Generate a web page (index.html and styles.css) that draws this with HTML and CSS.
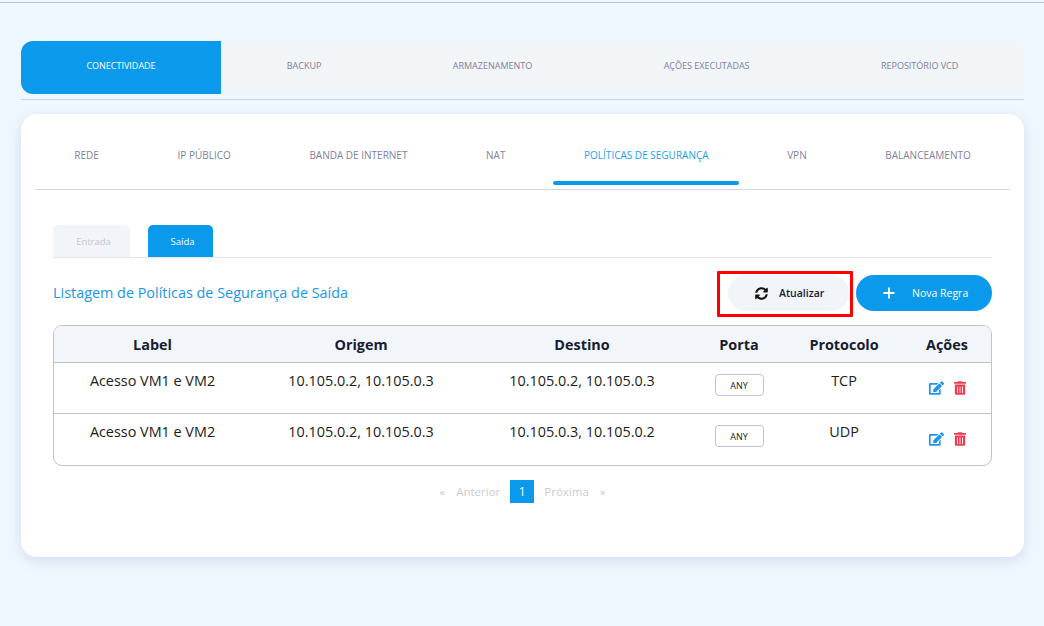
FILE: index.html
```html
<!DOCTYPE html>
<html>
<head>
  <title>Políticas de Segurança</title>
  <meta charset="utf-8">
  <link rel="stylesheet" href="styles.css">
</head>
<body>
  <div class="page">
    <nav class="main-tabs">
      <a class="main-tab active">CONECTIVIDADE</a>
      <a class="main-tab">BACKUP</a>
      <a class="main-tab">ARMAZENAMENTO</a>
      <a class="main-tab">AÇÕES EXECUTADAS</a>
      <a class="main-tab">REPOSITÓRIO VCD</a>
    </nav>

    <section class="card">
      <nav class="sub-tabs">
        <a class="sub-tab">REDE</a>
        <a class="sub-tab">IP PÚBLICO</a>
        <a class="sub-tab">BANDA DE INTERNET</a>
        <a class="sub-tab">NAT</a>
        <a class="sub-tab active">POLÍTICAS DE SEGURANÇA</a>
        <a class="sub-tab">VPN</a>
        <a class="sub-tab">BALANCEAMENTO</a>
      </nav>

      <div class="content">
        <div class="pill-tabs">
          <a class="pill-tab entrada">Entrada</a>
          <a class="pill-tab saida active">Saída</a>
        </div>

        <div class="list-header">
          <h2 class="list-title">Listagem de Políticas de Segurança de Saída</h2>
          <div class="actions">
            <button class="btn btn-light">
              <svg class="icon-sync" viewBox="0 0 512 512"><path d="M370.72 133.28C339.458 104.008 298.888 87.962 255.848 88c-77.458.068-144.328 53.178-162.791 126.85-1.344 5.363-6.122 9.15-11.651 9.15H24.103c-7.498 0-13.194-6.807-11.807-14.176C33.933 94.924 134.813 8 256 8c66.448 0 126.791 26.136 171.315 68.685L463.03 40.97C478.149 25.851 504 36.559 504 57.941V192c0 13.255-10.745 24-24 24H345.941c-21.382 0-32.09-25.851-16.971-40.971l41.75-41.749zM32 296h134.059c21.382 0 32.09 25.851 16.971 40.971l-41.75 41.75c31.262 29.273 71.835 45.319 114.876 45.28 77.418-.07 144.315-53.144 162.787-126.849 1.344-5.363 6.122-9.15 11.651-9.15h57.304c7.498 0 13.194 6.807 11.807 14.176C478.067 417.076 377.187 504 256 504c-66.448 0-126.791-26.136-171.315-68.685L48.97 471.03C33.851 486.149 8 475.441 8 454.059V320c0-13.255 10.745-24 24-24z"/></svg>
              <span>Atualizar</span>
              <span class="highlight"></span>
            </button>
            <button class="btn btn-primary">
              <svg class="icon-plus" viewBox="0 0 12 12"><path d="M6 0.5v11M0.5 6h11"/></svg>
              <span>Nova Regra</span>
            </button>
          </div>
        </div>

        <div class="table-wrap">
          <table class="rules">
            <thead>
              <tr>
                <th class="col-label">Label</th>
                <th class="col-origem">Origem</th>
                <th class="col-destino">Destino</th>
                <th class="col-porta">Porta</th>
                <th class="col-protocolo">Protocolo</th>
                <th>Ações</th>
              </tr>
            </thead>
            <tbody>
              <tr>
                <td>Acesso VM1 e VM2</td>
                <td>10.105.0.2, 10.105.0.3</td>
                <td>10.105.0.2, 10.105.0.3</td>
                <td><span class="badge">ANY</span></td>
                <td>TCP</td>
                <td>
                  <div class="row-actions">
                    <svg class="icon-edit" viewBox="0 0 576 512"><path d="M402.6 83.2l90.2 90.2c3.8 3.8 3.8 10 0 13.8L274.4 405.6l-92.8 10.3c-12.4 1.4-22.9-9.1-21.5-21.5l10.3-92.8L388.8 83.2c3.8-3.8 10-3.8 13.8 0zm162-22.9l-48.8-48.8c-15.2-15.2-39.9-15.2-55.2 0l-35.4 35.4c-3.8 3.8-3.8 10 0 13.8l90.2 90.2c3.8 3.8 10 3.8 13.8 0l35.4-35.4c15.2-15.3 15.2-40 0-55.2zM384 346.2V448H64V128h229.8c3.2 0 6.2-1.3 8.5-3.5l40-40c7.6-7.6 2.2-20.5-8.5-20.5H48C21.5 64 0 85.5 0 112v352c0 26.5 21.5 48 48 48h352c26.5 0 48-21.5 48-48V306.2c0-10.7-12.9-16-20.5-8.5l-40 40c-2.2 2.3-3.5 5.3-3.5 8.5z"/></svg>
                    <svg class="icon-trash" viewBox="0 0 448 512"><path d="M32 464a48 48 0 0 0 48 48h288a48 48 0 0 0 48-48V128H32zm272-256a16 16 0 0 1 32 0v224a16 16 0 0 1-32 0zm-96 0a16 16 0 0 1 32 0v224a16 16 0 0 1-32 0zm-96 0a16 16 0 0 1 32 0v224a16 16 0 0 1-32 0zM432 32H312l-9.4-18.7A24 24 0 0 0 281.1 0H166.8a23.72 23.72 0 0 0-21.4 13.3L136 32H16A16 16 0 0 0 0 48v32a16 16 0 0 0 16 16h416a16 16 0 0 0 16-16V48a16 16 0 0 0-16-16z"/></svg>
                  </div>
                </td>
              </tr>
              <tr>
                <td>Acesso VM1 e VM2</td>
                <td>10.105.0.2, 10.105.0.3</td>
                <td>10.105.0.3, 10.105.0.2</td>
                <td><span class="badge">ANY</span></td>
                <td>UDP</td>
                <td>
                  <div class="row-actions">
                    <svg class="icon-edit" viewBox="0 0 576 512"><path d="M402.6 83.2l90.2 90.2c3.8 3.8 3.8 10 0 13.8L274.4 405.6l-92.8 10.3c-12.4 1.4-22.9-9.1-21.5-21.5l10.3-92.8L388.8 83.2c3.8-3.8 10-3.8 13.8 0zm162-22.9l-48.8-48.8c-15.2-15.2-39.9-15.2-55.2 0l-35.4 35.4c-3.8 3.8-3.8 10 0 13.8l90.2 90.2c3.8 3.8 10 3.8 13.8 0l35.4-35.4c15.2-15.3 15.2-40 0-55.2zM384 346.2V448H64V128h229.8c3.2 0 6.2-1.3 8.5-3.5l40-40c7.6-7.6 2.2-20.5-8.5-20.5H48C21.5 64 0 85.5 0 112v352c0 26.5 21.5 48 48 48h352c26.5 0 48-21.5 48-48V306.2c0-10.7-12.9-16-20.5-8.5l-40 40c-2.2 2.3-3.5 5.3-3.5 8.5z"/></svg>
                    <svg class="icon-trash" viewBox="0 0 448 512"><path d="M32 464a48 48 0 0 0 48 48h288a48 48 0 0 0 48-48V128H32zm272-256a16 16 0 0 1 32 0v224a16 16 0 0 1-32 0zm-96 0a16 16 0 0 1 32 0v224a16 16 0 0 1-32 0zm-96 0a16 16 0 0 1 32 0v224a16 16 0 0 1-32 0zM432 32H312l-9.4-18.7A24 24 0 0 0 281.1 0H166.8a23.72 23.72 0 0 0-21.4 13.3L136 32H16A16 16 0 0 0 0 48v32a16 16 0 0 0 16 16h416a16 16 0 0 0 16-16V48a16 16 0 0 0-16-16z"/></svg>
                  </div>
                </td>
              </tr>
            </tbody>
          </table>
        </div>

        <div class="pagination">
          <span class="page-arrow">«</span>
          <span class="page-link prev">Anterior</span>
          <span class="page-current">1</span>
          <span class="page-link next">Próxima</span>
          <span class="page-arrow">»</span>
        </div>
      </div>
    </section>
  </div>
</body>
</html>
```

FILE: styles.css
```css
html, body {
  height: 100%;
}
body {
  margin: 0;
  background: #eff7fe;
  font-family: "Open Sans", "Noto Sans", sans-serif;
  color: #181c32;
  overflow: hidden;
}
.page {
  box-sizing: border-box;
  height: 626px;
  margin-top: 2px;
  border-top: 1px solid #bfc3c9;
  padding: 38px 20px 0 21px;
}

/* top tabs */
.main-tabs {
  display: flex;
  height: 53px;
  padding-bottom: 5px;
  border-bottom: 1px solid #ccd3de;
  background: linear-gradient(#f1f5f8 53px, transparent 53px);
  border-radius: 12px 12px 0 0;
}
.main-tab {
  flex: 1 1 auto;
  display: flex;
  align-items: center;
  justify-content: center;
  padding-bottom: 4px;
  font-size: 9px;
  color: #7e8299;
  white-space: nowrap;
}
.main-tab.active {
  max-width: 200px;
  background: #0a99eb;
  color: #fff;
  border-radius: 12px 0 0 12px;
}

/* card */
.card {
  box-sizing: border-box;
  height: 443px;
  margin-top: 14px;
  padding: 0 14px;
  background: #fff;
  border-radius: 16px;
  box-shadow: 0 4px 14px rgba(60, 80, 120, 0.14);
}
.sub-tabs {
  display: flex;
  height: 75px;
  border-bottom: 1px solid #d3d6da;
}
.sub-tab {
  flex: 1 1 auto;
  position: relative;
  display: flex;
  align-items: center;
  justify-content: center;
  padding-top: 7px;
  font-size: 10px;
  color: #7e8299;
  white-space: nowrap;
}
.sub-tab.active {
  color: #1ea0f0;
}
.sub-tab.active::after {
  content: "";
  position: absolute;
  left: 8px;
  right: 9px;
  bottom: 4px;
  height: 4px;
  border-radius: 2px;
  background: #0a99eb;
}

.content {
  padding: 35px 18px 0;
}

/* entrada / saida */
.pill-tabs {
  display: flex;
  gap: 18px;
  height: 32px;
  border-bottom: 1px solid #e4e6ef;
}
.pill-tab {
  display: flex;
  align-items: center;
  justify-content: center;
  padding-left: 4px;
  box-sizing: border-box;
  font-size: 9.5px;
  font-weight: 500;
  border-radius: 5px 5px 0 0;
}
.pill-tab.entrada {
  width: 77px;
  background: #f1f4f8;
  color: #c3c6d0;
}
.pill-tab.saida {
  width: 65px;
  background: #0a99eb;
  color: #fff;
}

.list-header {
  display: flex;
  align-items: center;
  justify-content: space-between;
  height: 36px;
  margin-top: 17px;
}
.list-title {
  margin: -2px 0 0;
  font-size: 14.4px;
  font-weight: 400;
  color: #2196e8;
}
.actions {
  display: flex;
  gap: 7px;
}
.btn {
  position: relative;
  display: flex;
  align-items: center;
  height: 36px;
  padding: 0;
  border: none;
  border-radius: 18px;
  font-family: inherit;
  font-size: 10.5px;
  font-weight: 600;
}
.btn-light {
  width: 121px;
  padding-left: 27px;
  gap: 11px;
  background: #f1f4f8;
  color: #181c32;
}
.btn-primary {
  width: 136px;
  padding-left: 27px;
  gap: 17px;
  background: #0a99eb;
  color: #fff;
  font-weight: 400;
}
.icon-sync {
  width: 13px;
  height: 13px;
  fill: #111;
}
.icon-plus {
  width: 12px;
  height: 12px;
  fill: none;
  stroke: #fff;
  stroke-width: 1.8;
}
/* red box drawn on top of the button */
.highlight {
  position: absolute;
  left: -11px;
  top: -4px;
  width: 136px;
  height: 46px;
  box-sizing: border-box;
  border: 3px solid #f00;
  border-radius: 1px;
}

/* table */
.table-wrap {
  margin-top: 14px;
  border: 1px solid #bfc3cb;
  border-radius: 9px;
  overflow: hidden;
}
.rules {
  width: 100%;
  border-collapse: collapse;
  table-layout: fixed;
  font-size: 14.4px;
  text-align: center;
}
.rules th {
  height: 36px;
  padding: 0;
  background: #f2f5f9;
  border-bottom: 1px solid #bfc3cb;
  font-weight: 700;
  font-size: 14.4px;
  color: #181c32;
}
.col-label { width: 197px; }
.col-origem { width: 220px; }
.col-destino { width: 222px; }
.col-porta { width: 92px; }
.col-protocolo { width: 118px; }
.rules td {
  height: 51px;
  padding: 8px 0 0;
  box-sizing: border-box;
  vertical-align: top;
  color: #1b1b22;
}
.rules tbody tr + tr td {
  border-top: 1px solid #bfc3cb;
  height: 51px;
}
.badge {
  display: inline-flex;
  align-items: center;
  justify-content: center;
  box-sizing: border-box;
  width: 49px;
  height: 22px;
  margin-top: 3px;
  border: 1px solid #bfc3cb;
  border-radius: 4px;
  font-size: 9px;
}
.row-actions {
  display: flex;
  justify-content: center;
  gap: 10px;
  margin-top: 10px;
}
.icon-edit {
  width: 15px;
  height: 14px;
  fill: #1e96f0;
}
.icon-trash {
  width: 12px;
  height: 14px;
  fill: #f4394f;
}

/* pagination */
.pagination {
  display: flex;
  align-items: center;
  justify-content: center;
  gap: 10px;
  margin-top: 14px;
  height: 23px;
  font-size: 11.5px;
  color: #c9ccd3;
}
.page-current {
  width: 24px;
  height: 23px;
  line-height: 23px;
  font-size: 12px;
  text-align: center;
  background: #0a99eb;
  color: #fff;
}
.page-arrow {
  margin: 0 1px;
}
```
